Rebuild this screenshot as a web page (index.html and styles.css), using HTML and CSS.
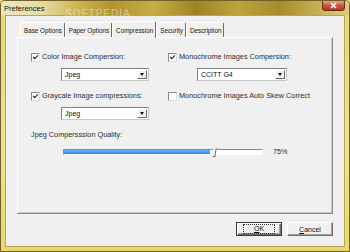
FILE: index.html
```html
<!DOCTYPE html>
<html lang="en">
<head>
  <meta charset="UTF-8" />
  <title>Preferences</title>
  <link rel="stylesheet" href="styles.css">
</head>
<body>
  <div class="window">
    <div class="titlebar">
      <span class="title">Preferences</span>
      <span class="watermark">SOFTPEDIA</span>
      <div class="close-btn">
        <svg width="9" height="7" viewBox="0 0 9 7"><path d="M2 1 L7 6 M7 1 L2 6" stroke="#fff" stroke-width="1.6"/></svg>
      </div>
    </div>

    <div class="frame">
      <div class="client">
        <div class="tabs">
          <div class="tab">Base Options</div>
          <div class="tab">Paper Options</div>
          <div class="tab active">Compression</div>
          <div class="tab">Security</div>
          <div class="tab">Description</div>
        </div>

        <div class="panel">
          <div class="options">
            <div class="option">
              <div class="check-row"><span class="checkbox checked"></span>Color Image Compersion:</div>
              <div class="select"><span class="select-value">Jpeg</span><span class="select-arrow"></span></div>
            </div>
            <div class="option">
              <div class="check-row"><span class="checkbox checked"></span>Monochrome Images Compersion:</div>
              <div class="select wide"><span class="select-value">CCITT G4</span><span class="select-arrow"></span></div>
            </div>
            <div class="option">
              <div class="check-row"><span class="checkbox checked"></span>Graycale Image compressions:</div>
              <div class="select"><span class="select-value">Jpeg</span><span class="select-arrow"></span></div>
            </div>
            <div class="option">
              <div class="check-row"><span class="checkbox"></span>Monochrome Images Auto Skew Correct</div>
            </div>
          </div>

          <div class="quality-label">Jpeg Compersssion Quality:</div>
          <div class="slider-row">
            <div class="slider">
              <div class="slider-fill" style="width: 73.5%"></div>
              <div class="slider-thumb" style="left: 75%"></div>
            </div>
            <span class="slider-value">75%</span>
          </div>
        </div>

        <div class="buttons">
          <button class="btn default"><span class="focus"><u>O</u>K</span></button>
          <button class="btn"><u>C</u>ancel</button>
        </div>
      </div>
    </div>
  </div>
</body>
</html>
```

FILE: styles.css
```css
* { box-sizing: border-box; }

body {
  margin: 0;
  font-family: 'Liberation Sans', Arial, sans-serif;
  font-size: 7.3px;
  color: #2e2e2e;
  background: #e3d470;
}

.window {
  width: 350px;
  height: 252px;
  display: flex;
  flex-direction: column;
  border: 1px solid #6f6128;
  border-radius: 5px 5px 0 0;
  background: linear-gradient(to bottom, #e6d77a, #efe38c 60%, #e8d86e);
  overflow: hidden;
}

/* title bar */
.titlebar {
  position: relative;
  height: 14px;
  flex: none;
  display: flex;
  align-items: center;
  padding-left: 3px;
  background: linear-gradient(to right, #ede7c4 0%, #e6dca0 12%, #cdb553 22%, #b09530 32%, #c8ad45 44%, #9c8425 56%, #bfa23c 68%, #a68c2c 80%, #c9b258 92%, #ddcd80 100%);
}

.title {
  font-size: 7.5px;
  color: #111;
}

.watermark {
  position: absolute;
  left: 64px;
  top: 7px;
  font-size: 10px;
  letter-spacing: 1px;
  color: rgba(255, 255, 255, 0.45);
}

.close-btn {
  position: absolute;
  right: 4px;
  top: -1px;
  width: 23px;
  height: 11px;
  display: flex;
  align-items: center;
  justify-content: center;
  border: 1px solid #6a2a1e;
  border-radius: 0 0 3px 3px;
  background: linear-gradient(to bottom, #e7a38f, #d0553c 50%, #b8321c);
}

/* frame + client area */
.frame {
  flex: 1;
  display: flex;
  padding: 0 4px 4px;
}

.client {
  flex: 1;
  display: flex;
  flex-direction: column;
  padding: 5px 11px 0;
  background: #f0f0f0;
  border: 1px solid #b8a452;
}

/* tabs */
.tabs {
  display: flex;
  height: 16px;
  padding-left: 3px;
  align-items: flex-end;
}

.tab {
  height: 15px;
  padding: 0 2px 0 3px;
  display: flex;
  align-items: center;
  font-size: 6.3px;
  color: #111;
  border-top: 1px solid #fff;
  border-left: 1px solid #fff;
  border-right: 1px solid #6d6d6d;
  border-radius: 2px 2px 0 0;
}

.tab.active {
  height: 17px;
  margin-bottom: -1px;
  position: relative;
  z-index: 1;
  background: #f0f0f0;
}

.panel {
  height: 177px;
  padding: 14px 0 0 13px;
  border: 1px solid;
  border-color: #fff #8a8a8a #8a8a8a #fff;
  box-shadow: inset -1px -1px #c8c8c8;
}

.options {
  display: grid;
  grid-template-columns: 137px 1fr;
  row-gap: 10px;
}

.check-row {
  display: flex;
  align-items: center;
  height: 10px;
  line-height: 10px;
}

.checkbox {
  width: 9px;
  height: 9px;
  margin-right: 2px;
  display: inline-flex;
  align-items: center;
  justify-content: center;
  background: #fff;
  border: 1px solid;
  border-color: #8a8a8a #dcdcdc #dcdcdc #8a8a8a;
}

.checkbox.checked::after {
  content: "";
  width: 4px;
  height: 2px;
  margin-top: -1px;
  border-left: 1.5px solid #111;
  border-bottom: 1.5px solid #111;
  transform: rotate(-45deg);
}

.select {
  display: flex;
  width: 88px;
  height: 13px;
  margin: 6px 0 0 30px;
  background: #fff;
  border: 1px solid;
  border-color: #7f7f7f #c8c8c8 #c8c8c8 #7f7f7f;
}

.select.wide {
  margin-left: 29px;
  width: 90px;
}

.select-value {
  flex: 1;
  padding-left: 3px;
  line-height: 11px;
  font-size: 7px;
  color: #111;
}

.select-arrow {
  width: 10px;
  margin: 1px;
  display: flex;
  align-items: center;
  justify-content: center;
  background: #f0f0f0;
  border: 1px solid;
  border-color: #fff #6d6d6d #6d6d6d #fff;
}

.select-arrow::after {
  content: "";
  border-left: 2.5px solid transparent;
  border-right: 2.5px solid transparent;
  border-top: 3px solid #111;
}

/* quality slider */
.quality-label {
  margin-top: 10px;
  height: 10px;
  line-height: 10px;
}

.slider-row {
  display: flex;
  align-items: center;
  margin: 7px 0 0 32px;
}

.slider {
  position: relative;
  width: 200px;
  height: 6px;
  background: #fff;
  border: 1px solid;
  border-color: #8a8a8a #fff #fff #8a8a8a;
}

.slider-fill {
  height: 100%;
  background: linear-gradient(to bottom, #6fb4f6, #2b86ea);
}

.slider-thumb {
  position: absolute;
  top: -2px;
  width: 3px;
  height: 9px;
  background: #f0f0f0;
  border-left: 1px solid #fff;
  border-right: 1px solid #6d6d6d;
  border-bottom: 1px solid #6d6d6d;
  transform: skewX(-10deg);
}

.slider-value {
  margin-left: 10px;
}

/* buttons */
.buttons {
  display: flex;
  justify-content: flex-end;
  gap: 5px;
  margin-top: 8px;
}

.btn {
  width: 46px;
  height: 14px;
  padding: 0;
  font-family: inherit;
  font-size: 7px;
  color: #111;
  background: #f0f0f0;
  border: 1px solid;
  border-color: #fff #6d6d6d #6d6d6d #fff;
  box-shadow: inset -1px -1px #a0a0a0;
}

.btn.default {
  border-color: #3a3a3a;
  box-shadow: inset 1px 1px #fff, inset -1px -1px #6d6d6d, inset -2px -2px #a0a0a0;
}

.focus {
  display: inline-block;
  padding: 0 10px;
  border: 1px dotted #333;
  line-height: 8px;
}
```
